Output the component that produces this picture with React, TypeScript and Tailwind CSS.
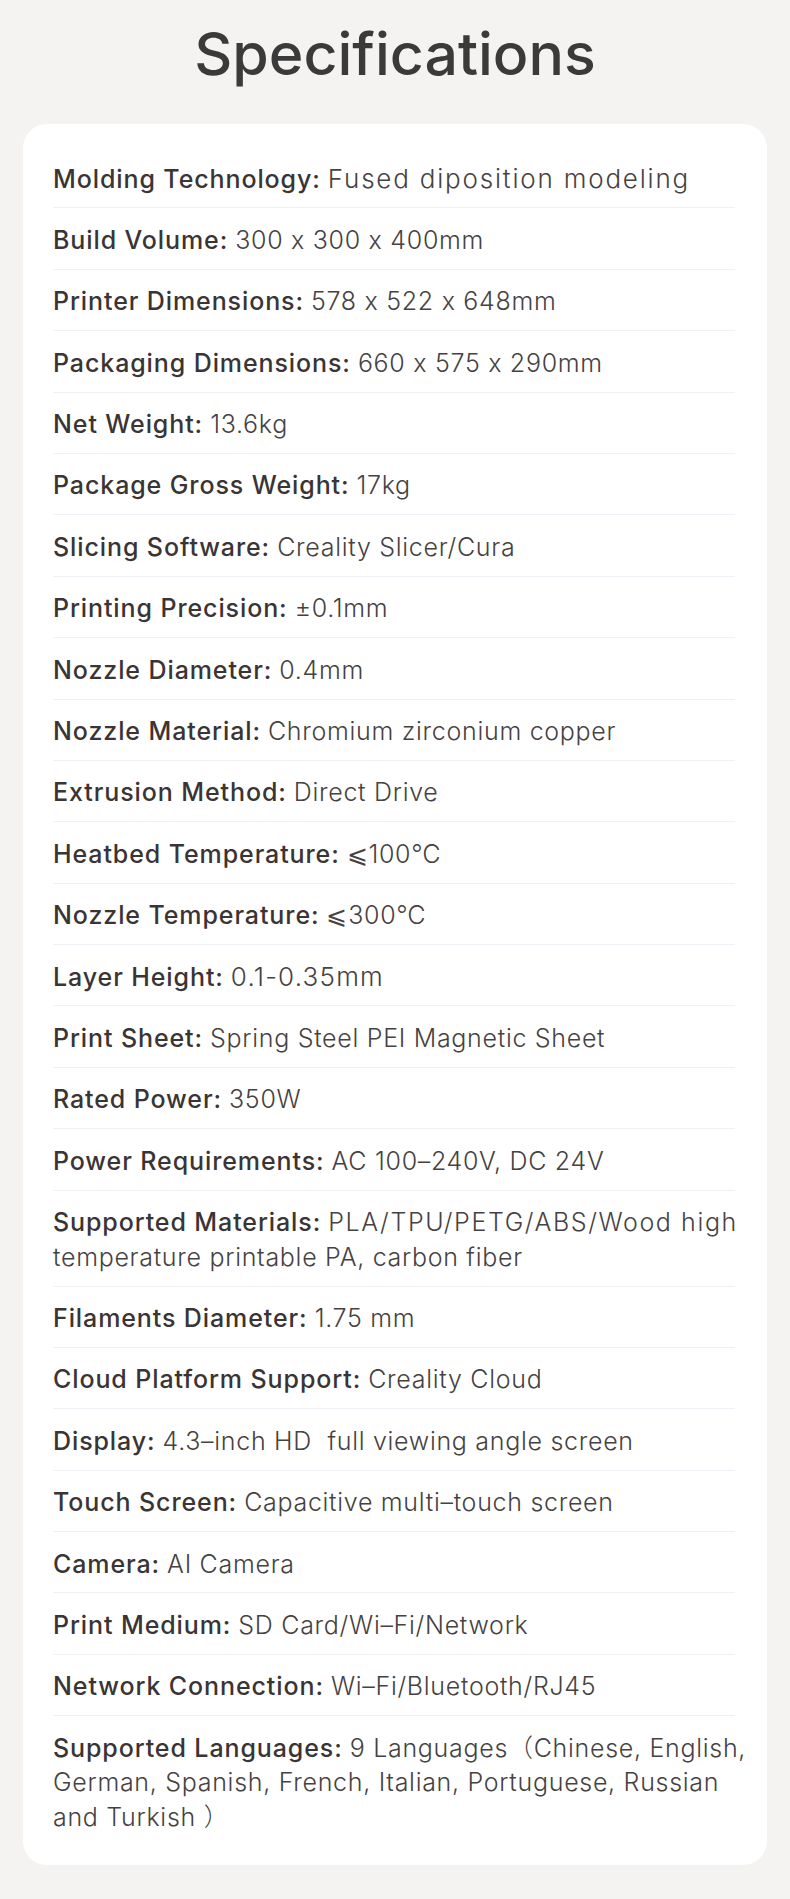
import React from "react";

type Spec = { label: string; value: React.ReactNode; wide?: string };

const specs: Spec[] = [
  {
    label: "Molding Technology:",
    value: "Fused diposition modeling",
    wide: "text-[26px] tracking-[1.8px]",
  },
  { label: "Build Volume:", value: "300 x 300 x 400mm" },
  { label: "Printer Dimensions:", value: "578 x 522 x 648mm" },
  { label: "Packaging Dimensions:", value: "660 x 575 x 290mm" },
  { label: "Net Weight:", value: "13.6kg" },
  { label: "Package Gross Weight:", value: "17kg" },
  { label: "Slicing Software:", value: "Creality Slicer/Cura" },
  { label: "Printing Precision:", value: "±0.1mm" },
  { label: "Nozzle Diameter:", value: "0.4mm" },
  { label: "Nozzle Material:", value: "Chromium zirconium copper" },
  { label: "Extrusion Method:", value: "Direct Drive" },
  { label: "Heatbed Temperature:", value: "⩽100℃" },
  { label: "Nozzle Temperature:", value: "⩽300℃" },
  {
    label: "Layer Height:",
    value: "0.1-0.35mm",
    wide: "text-[26px] tracking-[1.2px]",
  },
  { label: "Print Sheet:", value: "Spring Steel PEI Magnetic Sheet" },
  { label: "Rated Power:", value: "350W" },
  { label: "Power Requirements:", value: "AC 100–240V, DC 24V" },
  {
    label: "Supported Materials:",
    value: (
      <>
        <span className="tracking-[1.6px]">PLA/TPU/PETG/ABS/Wood high</span>
        <br />
        temperature printable PA, carbon fiber
      </>
    ),
  },
  { label: "Filaments Diameter:", value: "1.75 mm" },
  { label: "Cloud Platform Support:", value: "Creality Cloud" },
  { label: "Display:", value: "4.3–inch HD\u00a0 full viewing angle screen" },
  { label: "Touch Screen:", value: "Capacitive multi–touch screen" },
  { label: "Camera:", value: "AI Camera" },
  { label: "Print Medium:", value: "SD Card/Wi–Fi/Network" },
  { label: "Network Connection:", value: "Wi–Fi/Bluetooth/RJ45" },
  {
    label: "Supported Languages:",
    value: (
      <>
        9 Languages（Chinese, English,
        <br />
        German, Spanish, French, Italian, Portuguese, Russian
        <br />
        and Turkish ）
      </>
    ),
  },
];

const App: React.FC = () => {
  return (
    <div className="min-h-[1899px] w-full bg-[#f4f3f1] px-[23px] pb-[36px] font-['Inter','Noto_Sans_CJK_SC',sans-serif] [font-feature-settings:'calt'_0]">
      <h1 className="pt-[18px] text-center text-[59px] font-medium leading-[72px] text-[#3a3a3a]">
        Specifications
      </h1>

      {/* Spec card */}
      <div className="mt-[34px] rounded-[24px] bg-white pb-[19px] pl-[30px] pr-[32px] pt-[23px]">
        {specs.map((spec, i) => (
          <div
            key={spec.label}
            className={
              "whitespace-nowrap pb-[11.4px] pt-[14.5px] text-[25px] leading-[34.5px] " +
              (i < specs.length - 1 ? "border-b border-[#f0f0f6]" : "")
            }
          >
            <span className="font-medium tracking-[0.9px] text-[#3a3434]">
              {spec.label}
            </span>{" "}
            <span
              className={
                "font-light text-[#464242] " +
                (spec.wide ? spec.wide : "tracking-[0.7px]")
              }
            >
              {spec.value}
            </span>
          </div>
        ))}
      </div>
    </div>
  );
};

export default App;
